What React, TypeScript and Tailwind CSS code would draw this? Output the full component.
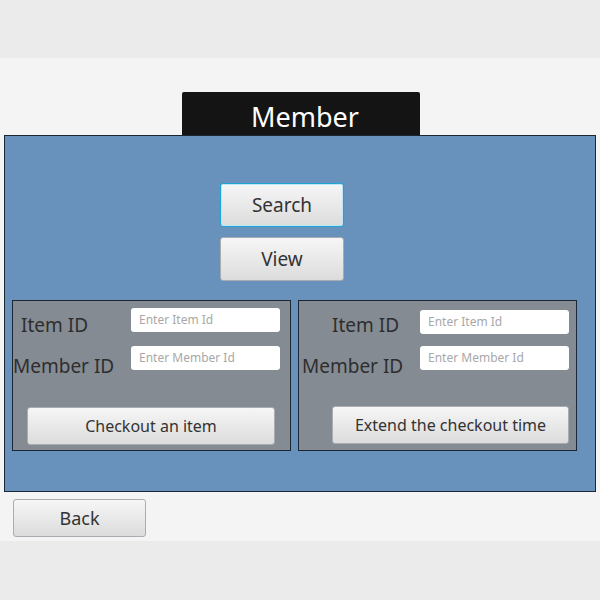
import React from "react";

const font = { fontFamily: '"Noto Sans", "Open Sans", sans-serif' };

function Btn({ children, className = "", focus = false }: { children: React.ReactNode; className?: string; focus?: boolean }) {
  return (
    <div
      className={
        "flex shrink-0 items-center justify-center rounded-[3px] bg-gradient-to-b from-[#f6f6f6] to-[#dcdcdc] text-[#333333] " +
        (focus ? "border border-[#1ea4d6] shadow-[inset_0_0_0_1px_#bfe6f4]" : "border border-[#a9acb0]") +
        " " +
        className
      }
    >
      {children}
    </div>
  );
}

function Input({ placeholder, className = "" }: { placeholder: string; className?: string }) {
  return (
    <div className={"flex h-[24px] w-[149px] shrink-0 items-center rounded-[3px] bg-white pl-[8px] text-[12px] text-[#a8a8a8] " + className}>
      {placeholder}
    </div>
  );
}

const label = "text-[19px] leading-[26px] text-[#2e2e2e] whitespace-nowrap";

export default function App() {
  return (
    <div className="flex h-[600px] w-[600px] flex-col bg-[#ebebeb]" style={font}>
      <div className="h-[58px] shrink-0" />
      <div className="flex h-[483px] shrink-0 flex-col bg-[#f4f4f4]">
        <div className="ml-[182px] mt-[34px] flex h-[43px] w-[238px] items-center justify-center rounded-t-[2px] bg-[#141414] pl-[8px] pt-[7px] text-[27px] text-white">
          Member
        </div>
        <div className="ml-[4px] flex h-[357px] w-[592px] flex-col border border-[#1c2734] bg-[#6892bc]">
          <Btn focus className="ml-[215px] mt-[47px] h-[44px] w-[124px] text-[19px]">
            Search
          </Btn>
          <Btn className="ml-[215px] mt-[10px] h-[44px] w-[124px] text-[19px]">View</Btn>
          <div className="ml-[7px] mt-[19px] flex gap-[7px]">
            <div className="flex h-[151px] w-[279px] flex-col border border-[#1c2734] bg-[#858b93]">
              <div className="mt-[7px] flex h-[24px] items-start">
                <div className={"ml-[8px] mt-[4px] w-[110px] " + label}>Item ID</div>
                <Input placeholder="Enter Item Id" />
              </div>
              <div className="mt-[14px] flex h-[24px] items-start">
                <div className={"ml-0 mt-[7px] w-[118px] " + label}>Member ID</div>
                <Input placeholder="Enter Member Id" />
              </div>
              <Btn className="ml-[14px] mt-[37px] h-[38px] w-[248px] text-[16px]">Checkout an item</Btn>
            </div>
            <div className="flex h-[151px] w-[279px] flex-col border border-[#1c2734] bg-[#858b93]">
              <div className="mt-[9px] flex h-[24px] items-start">
                <div className={"ml-[33px] mt-[2px] w-[88px] " + label}>Item ID</div>
                <Input placeholder="Enter Item Id" />
              </div>
              <div className="mt-[12px] flex h-[24px] items-start">
                <div className={"ml-[3px] mt-[7px] w-[118px] " + label}>Member ID</div>
                <Input placeholder="Enter Member Id" />
              </div>
              <Btn className="ml-[33px] mt-[36px] h-[38px] w-[237px] text-[16px]">Extend the checkout time</Btn>
            </div>
          </div>
        </div>
        <Btn className="ml-[13px] mt-[7px] h-[38px] w-[133px] text-[18px]">Back</Btn>
      </div>
    </div>
  );
}
